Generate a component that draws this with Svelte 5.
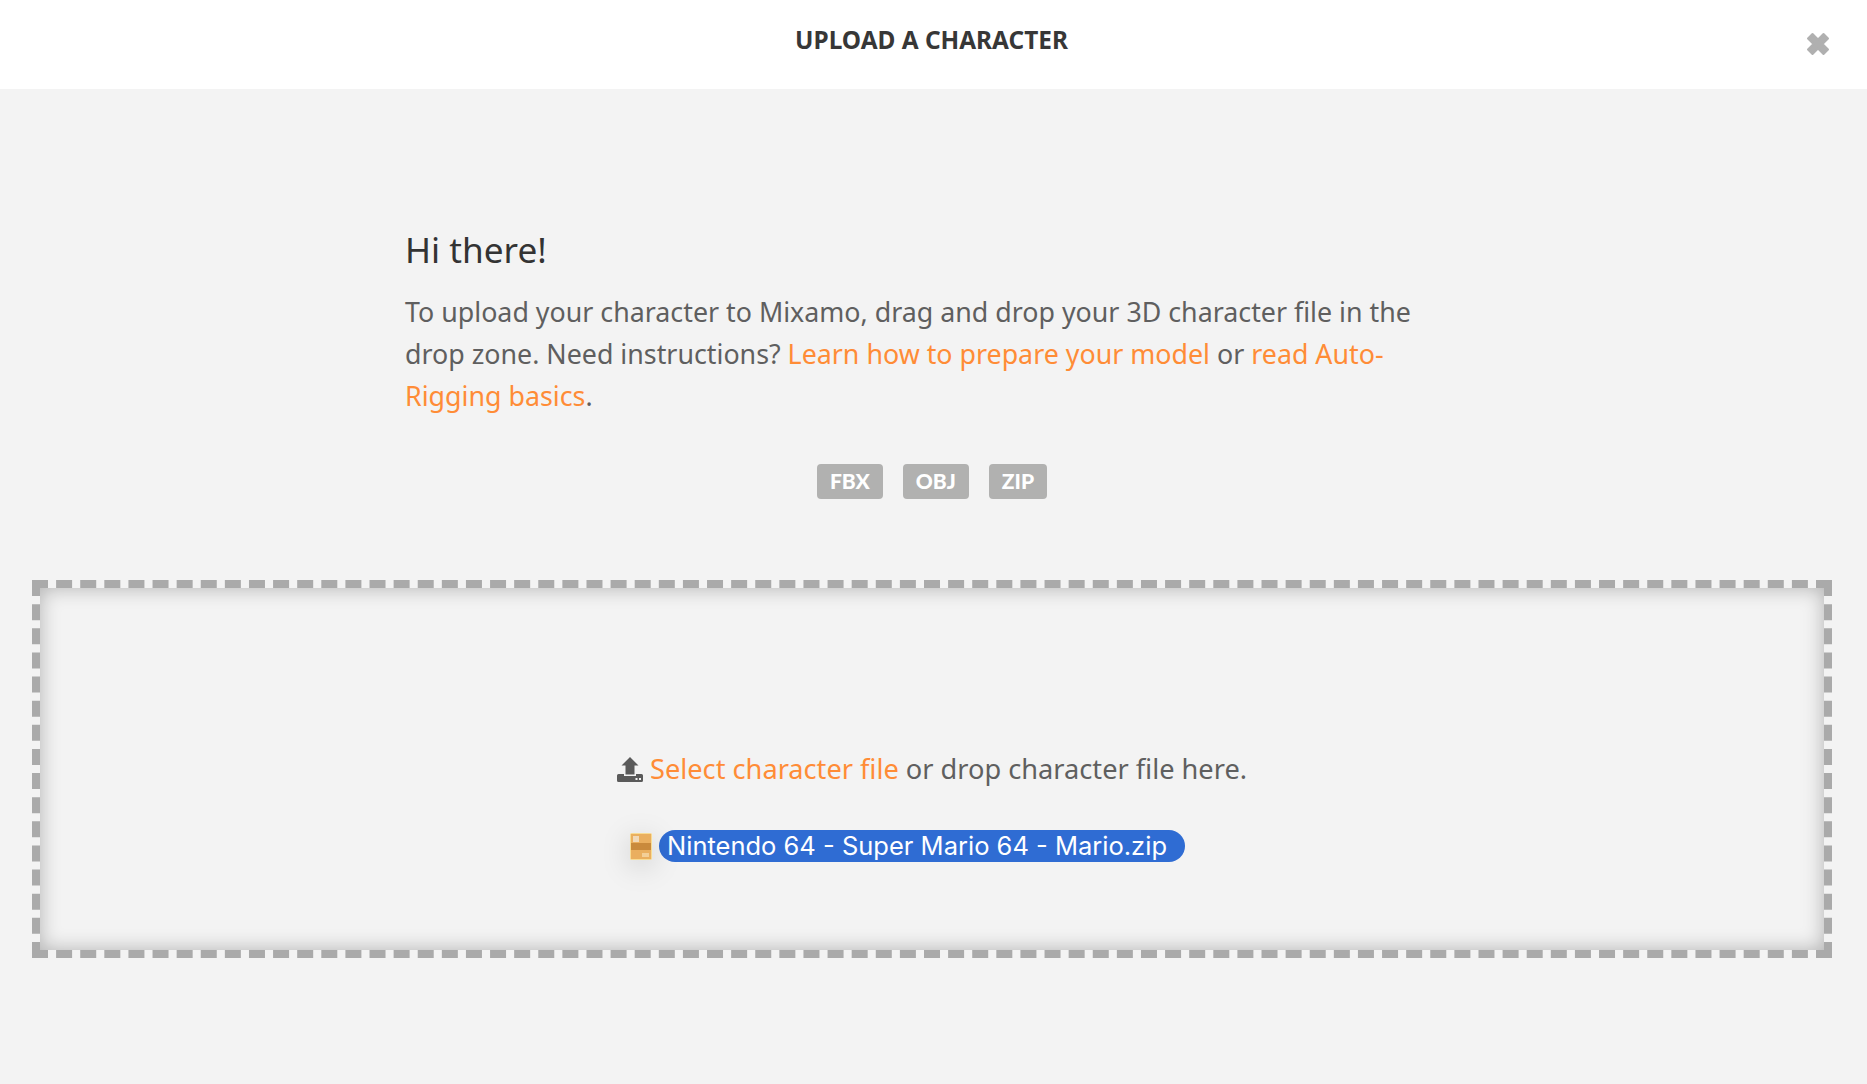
<script>
  const formats = ['FBX', 'OBJ', 'ZIP'];
</script>

<div class="page">
  <header class="top">
    <h1>UPLOAD A CHARACTER</h1>
    <button class="close" aria-label="Close">
      <svg viewBox="0 0 24 24" width="24" height="24"><path d="M2 6.500 6.500 2 12 7.500 17.500 2 22 6.500 16.500 12 22 17.500 17.500 22 12 16.500 6.500 22 2 17.500 7.500 12Z" fill="#b0b0b0" stroke="#b0b0b0" stroke-width="2" stroke-linejoin="round"/></svg>
    </button>
  </header>

  <main class="body">
    <section class="intro">
      <h2>Hi there!</h2>
      <p>To upload your character to Mixamo, drag and drop your 3D character file in the drop zone. Need instructions? <a href="#a">Learn how to prepare your model</a> or <a href="#b">read Auto-Rigging basics</a>.</p>
      <div class="badges">
        {#each formats as f}<span class="badge">{f}</span>{/each}
      </div>
    </section>

    <section class="zone">
      <div class="line">
        <svg class="up" viewBox="0 0 26 25" width="26" height="25"><path d="M13 0 21.500 8.500H17.500V17.500H8.500V8.500H4.500ZM1.500 17H7V19H19V17H24.500Q26 17 26 18.500V23.500Q26 25 24.500 25H1.500Q0 25 0 23.500V18.500Q0 17 1.500 17Z" fill="#5a5a5a"/><rect x="18.500" y="21" width="2" height="2" fill="#f3f3f3"/><rect x="22" y="21" width="2" height="2" fill="#f3f3f3"/></svg>
        <span><a href="#c">Select character file</a> or drop character file here.</span>
      </div>
      <div class="drag">
        <svg class="file" viewBox="0 0 22 27" width="22" height="27">
          <rect x="0.500" y="0.500" width="21" height="26" rx="1" fill="#eaaf5f" stroke="#f8dc94"/>
          <rect x="1" y="10" width="20" height="7" fill="#c98a3c"/>
          <rect x="3" y="3" width="6" height="6" fill="#f1d9b8"/>
          <rect x="12" y="20" width="7" height="4" fill="#f3cf97"/>
        </svg>
        <span class="pill">Nintendo 64 - Super Mario 64 - Mario.zip</span>
      </div>
    </section>
  </main>
</div>

<style>
  :global(body) { margin: 0; background: #f3f3f3; font-family: "Noto Sans", sans-serif; }
  .page { height: 1084px; display: flex; flex-direction: column; overflow: hidden; background: #f3f3f3; }
  .top { height: 89px; flex: none; background: #fff; position: relative; display: flex; justify-content: center; box-sizing: border-box; padding: 24px 4px 0 0; }
  h1 { margin: 0; font-size: 24.400px; line-height: 32px; font-weight: 700; color: #373737; }
  .close { position: absolute; left: 1806px; top: 32px; padding: 0; border: 0; background: none; width: 24px; height: 24px; }
  .close svg { display: block; }
  .body { flex: 1; padding: 0 35px 0 32px; display: flex; flex-direction: column; }
  .intro { width: 1054px; margin: 0 auto; padding-top: 138px; }
  h2 { margin: 0; font-size: 35.200px; line-height: 44px; font-weight: 400; color: #333; }
  p { margin: 20px 0 0; font-size: 26.800px; line-height: 42px; color: #5f5f5f; }
  a { color: #ff8c36; text-decoration: none; }
  .badges { display: flex; justify-content: center; gap: 20px; margin-top: 47px; }
  .badge { height: 35px; padding: 0 13px; background: #b1b1b0; color: #fff; font-family: Lato, sans-serif; font-weight: 900; font-size: 21px; line-height: 33px; border-radius: 4px; }
  .zone { margin-top: 81px; height: 378px; box-sizing: border-box; border: 8px dashed #aaa; box-shadow: inset 0 0 20px rgba(0,0,0,.28); display: flex; flex-direction: column; align-items: center; padding-top: 161px; background-clip: padding-box; }
  .line { display: flex; align-items: center; gap: 7px; font-size: 27.200px; line-height: 40px; color: #5f5f5f; }
  .drag { display: flex; align-items: center; margin-top: 41px; gap: 7px; margin-right: 49px; }
  .file { display: block; filter: blur(.5px) drop-shadow(0 6px 14px rgba(0,0,0,.16)); }
  .pill { height: 32px; padding: 0 18px 0 8px; background: #2f6cd3; color: #fff; border-radius: 16px; font-family: Inter, sans-serif; font-size: 25.500px; line-height: 32px; white-space: nowrap; }
</style>
